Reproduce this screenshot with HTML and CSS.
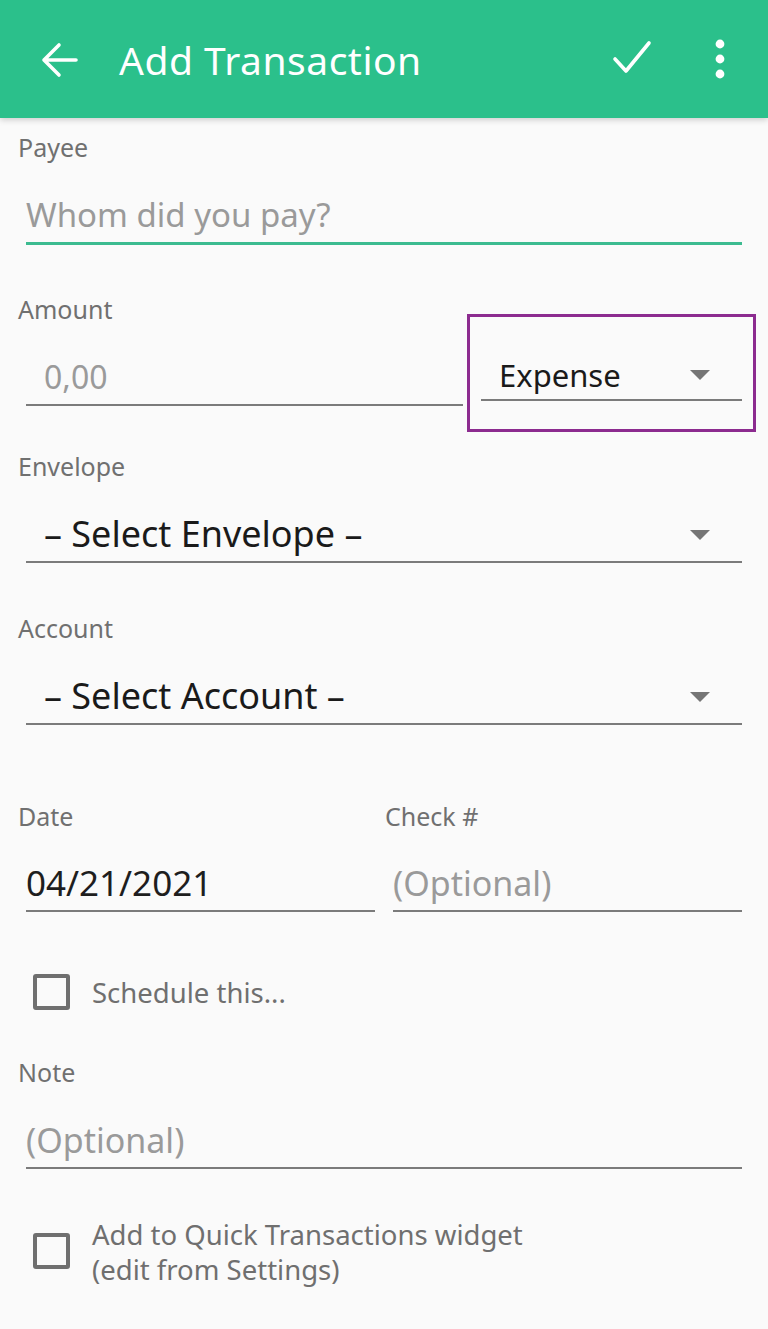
FILE: index.html
```html
<!DOCTYPE html>
<html>
<head>
<meta charset="utf-8">
<link rel="stylesheet" href="styles.css">
</head>
<body>
<header class="appbar">
  <svg class="icon back" width="48" height="48" viewBox="0 0 48 48"><path d="M40 24H8M23 9L8 24l15 15" fill="none" stroke="#fff" stroke-width="3.6" stroke-linecap="round" stroke-linejoin="round"/></svg>
  <h1 class="title">Add Transaction</h1>
  <svg class="icon check" width="48" height="48" viewBox="0 0 48 48"><path d="M6 25l11 12L40 9" fill="none" stroke="#fff" stroke-width="3.6" stroke-linecap="round" stroke-linejoin="round"/></svg>
  <svg class="icon more" width="20" height="48" viewBox="0 0 20 48"><circle cx="10" cy="9" r="4.4" fill="#fff"/><circle cx="10" cy="24" r="4.4" fill="#fff"/><circle cx="10" cy="39" r="4.4" fill="#fff"/></svg>
</header>

<main class="form">
  <section class="field payee">
    <div class="label">Payee</div>
    <div class="control focused placeholder big">Whom did you pay?</div>
  </section>

  <section class="amount-row">
    <div class="field amount">
      <div class="label">Amount</div>
      <div class="control placeholder indent">0,00</div>
    </div>
    <div class="highlight">
      <div class="spinner small">
        <span>Expense</span>
        <span class="caret"></span>
      </div>
    </div>
  </section>

  <section class="field envelope">
    <div class="label">Envelope</div>
    <div class="control spinner">
      <span>– Select Envelope –</span>
      <span class="caret"></span>
    </div>
  </section>

  <section class="field account">
    <div class="label">Account</div>
    <div class="control spinner">
      <span>– Select Account –</span>
      <span class="caret"></span>
    </div>
  </section>

  <section class="date-row">
    <div class="field col">
      <div class="label">Date</div>
      <div class="control value">04/21/2021</div>
    </div>
    <div class="field col">
      <div class="label">Check #</div>
      <div class="control placeholder opt">(Optional)</div>
    </div>
  </section>

  <label class="check-row schedule">
    <span class="box"></span>
    <span class="check-text">Schedule this...</span>
  </label>

  <section class="field note">
    <div class="label">Note</div>
    <div class="control placeholder opt">(Optional)</div>
  </section>

  <label class="check-row quick">
    <span class="box"></span>
    <span class="check-text">Add to Quick Transactions widget<br>(edit from Settings)</span>
  </label>
</main>
</body>
</html>
```

FILE: styles.css
```css
* { box-sizing: border-box; }
html, body {
  margin: 0;
  padding: 0;
  background: #fafafa;
  font-family: "Noto Sans", "Open Sans", sans-serif;
}
body { width: 768px; height: 1329px; overflow: hidden; }

.appbar {
  height: 118px;
  background: #2bc08b;
  display: flex;
  align-items: center;
  padding: 0 0 0 36px;
  box-shadow: 0 2px 6px rgba(0,0,0,0.18);
  position: relative;
  z-index: 1;
}
.icon { display: block; flex: none; }
.back { margin-top: 2px; }
.title {
  margin: 0 0 0 35px;
  font-weight: 400;
  font-size: 39px;
  color: #fff;
  flex: 1;
  letter-spacing: 0.5px;
}
.check { margin-right: 53px; margin-top: -2px; }
.more { margin-right: 38px; }

.form {
  padding: 14px 26px 0 18px;
}
.label {
  font-size: 25px;
  line-height: 30px;
  height: 30px;
  color: #707070;
}
.control {
  margin-left: 8px;
  margin-top: 29px;
  height: 53px;
  line-height: 48px;
  border-bottom: 2px solid #7b7b7b;
  font-size: 32px;
  color: #1e1e1e;
  white-space: nowrap;
}
.control.focused { border-bottom: 3px solid #3cbb90; height: 54px; }
.placeholder { color: #9a9a9a; }
.big { font-size: 33px; }
.indent { padding-left: 18px; }
.value { font-size: 35px; }
.opt { font-size: 34px; }

.amount-row {
  display: flex;
  margin-top: 49px;
}
.amount { flex: 1; }
.highlight {
  width: 289px;
  height: 118px;
  margin: 20px -14px -26px 4px;
  border: 3px solid #8c2b8f;
  padding: 34px 11px 0 11px;
}
.spinner {
  display: flex;
  align-items: center;
  padding-left: 18px;
  padding-right: 32px;
  font-size: 36px;
  color: #1a1a1a;
}
.spinner span:first-child { flex: 1; }
.control.spinner { align-items: flex-start; }
.control.spinner .caret { margin-top: 20px; }
.spinner.small {
  height: 50px;
  line-height: 48px;
  border-bottom: 2px solid #7b7b7b;
  font-size: 31px;
  align-items: flex-start;
}
.spinner.small .caret { margin-top: 19px; }
.caret {
  width: 0;
  height: 0;
  border-left: 10px solid transparent;
  border-right: 10px solid transparent;
  border-top: 10px solid #757575;
}

.envelope { margin-top: 45px; }
.account { margin-top: 50px; }

.date-row {
  display: flex;
  gap: 10px;
  margin-top: 76px;
}
.col { flex: 1; }
.col .control { margin-top: 28px; }

.check-row {
  display: flex;
  align-items: center;
  padding-left: 15px;
}
.box {
  width: 37px;
  height: 36px;
  border: 4px solid #6f6f6f;
  border-radius: 3px;
  flex: none;
}
.check-text {
  margin-left: 22px;
  font-size: 27.5px;
  line-height: 35px;
  color: #6f6f6f;
}
.schedule { margin-top: 62px; }
.note { margin-top: 47px; }
.quick { margin-top: 48px; align-items: center; }
.quick .box { margin-top: -3px; }
```
